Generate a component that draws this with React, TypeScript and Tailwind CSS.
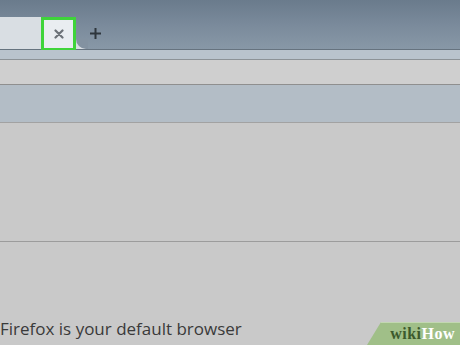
export default function App() {
  return (
    <div className="relative w-[460px] h-[345px] overflow-hidden bg-[#c9c9c9] flex flex-col" style={{ fontFamily: '"Open Sans", "Noto Sans", sans-serif' }}>
      {/* Title bar with tabs */}
      <div className="h-[50px] shrink-0 flex items-end bg-gradient-to-b from-[#6a7b8c] via-[#7a8a9b] to-[#8898a7] border-b border-[#66737f]">
        <div className="flex items-start h-[32px]">
          {/* active tab */}
          <div className="h-[32px] w-[76px] bg-[#d9dee3] rounded-tr-[8px] flex justify-end">
            <div className="w-[35px] h-[34px] border-[3px] border-[#3fd43a] bg-[#e9edf1] flex items-center justify-center">
              <svg width="10" height="10" viewBox="0 0 10 10">
                <path d="M1.5 1.5 L8.5 8.5 M8.5 1.5 L1.5 8.5" stroke="#6c7278" strokeWidth="2.2" strokeLinecap="round" />
              </svg>
            </div>
          </div>
          {/* curve foot */}
          <div className="self-end w-[12px] h-[10px] bg-[#d9dee3]">
            <div className="w-full h-full bg-[#8392a1] rounded-bl-[10px]" />
          </div>
          {/* new tab */}
          <div className="pt-[10px] pl-[1px]">
            <svg width="13" height="13" viewBox="0 0 13 13">
              <path d="M6.5 1 V12 M1 6.5 H12" stroke="#2e363d" strokeWidth="2" />
            </svg>
          </div>
        </div>
      </div>

      {/* toolbar strips */}
      <div className="h-[10px] shrink-0 bg-[#b9c3cd] border-b border-[#8c9297]" />
      <div className="h-[25px] shrink-0 bg-[#cfcfcf] border-b border-[#8f8f8f]" />
      <div className="h-[38px] shrink-0 bg-[#b3bdc6] border-b border-[#a2a2a2]" />

      {/* content */}
      <div className="h-[119px] shrink-0 border-b border-[#9c9c9c]" />

      <div className="mt-[76px] text-[17px] leading-[22px] text-[#3a3a3a] whitespace-nowrap">
        Firefox is your default browser
      </div>

      {/* wikiHow badge */}
      <div className="absolute right-0 bottom-0 w-[93px] h-[23px] bg-[#a0bf88] border-t border-[#c3d8b2] flex items-center justify-end pr-[5px]" style={{ clipPath: "polygon(14px 0, 100% 0, 100% 100%, 0 100%)" }}>
        <span className="text-[16px] font-bold leading-none tracking-[0.5px]" style={{ fontFamily: '"Liberation Serif", serif' }}>
          <span className="text-[#3c5a2c]">wiki</span>
          <span className="text-white">How</span>
        </span>
      </div>
    </div>
  );
}
